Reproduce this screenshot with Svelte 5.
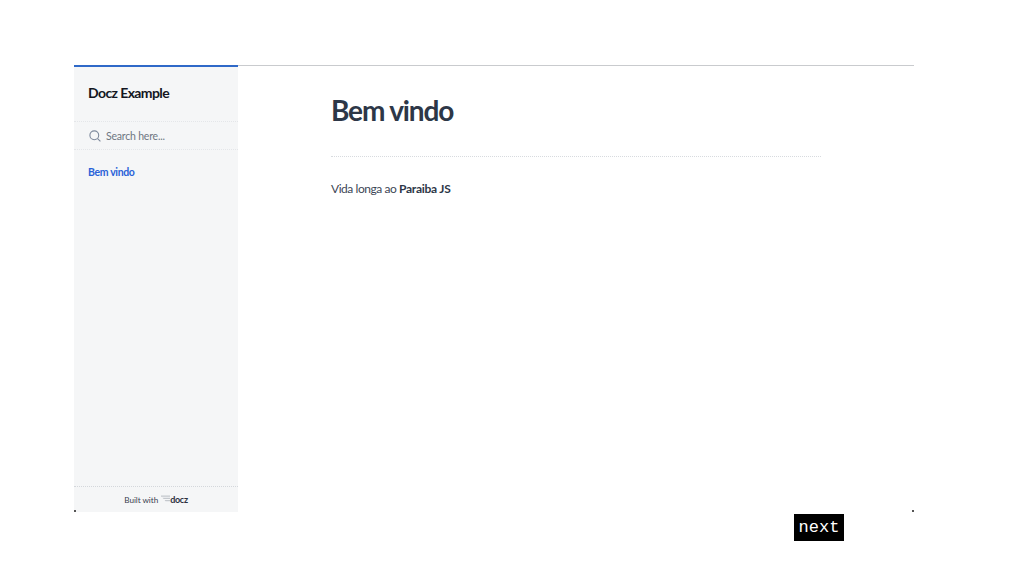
<script>
  const menu = ["Bem vindo"];
</script>

<div class="page">
  <div class="slide">
    <aside class="sidebar">
      <h2 class="brand">Docz Example</h2>
      <div class="search">
        <svg width="12" height="12" viewBox="0 0 12 12" fill="none" stroke="#7d899c" stroke-width="1.1">
          <circle cx="5.3" cy="5.3" r="4.4" />
          <path d="M8.6 8.6 11.4 11.4" />
        </svg>
        <span>Search here...</span>
      </div>
      <nav>
        {#each menu as item}
          <span class="link">{item}</span>
        {/each}
      </nav>
      <footer>
        <span>Built with</span>
        <span class="logo">
          <svg width="9" height="8" viewBox="0 0 10 8" fill="#c4c8cd">
            <path d="M0 0H10V1.5H0ZM1.5 2.5H10V4H3ZM4 5H10V6.5H5Z" />
          </svg>
          <b>docz</b>
        </span>
      </footer>
    </aside>
    <main class="content">
      <h1>Bem vindo</h1>
      <hr />
      <p>Vida longa ao <strong>Paraiba JS</strong></p>
    </main>
    <i class="corner left"></i>
    <i class="corner right"></i>
  </div>
  <button class="next" type="button">next</button>
</div>

<style>
  :global(body) {
    background: #fff;
  }

  .page {
    position: relative;
    width: 1024px;
    height: 576px;
    padding: 65px 110px 0 74px;
    box-sizing: border-box;
    overflow: hidden;
    font-family: Lato, "Open Sans", sans-serif;
  }

  .slide {
    position: relative;
    display: flex;
    height: 447px;
  }

  .sidebar {
    width: 164px;
    flex: none;
    display: flex;
    flex-direction: column;
    box-sizing: border-box;
    border-top: 2px solid #2f69c8;
    background: #f5f6f7;
  }

  .brand {
    margin: 0;
    padding: 17px 14px 0;
    height: 54px;
    box-sizing: border-box;
    font-size: 14px;
    line-height: 18px;
    font-weight: 700;
    letter-spacing: -0.6px;
    color: #13161f;
  }

  .search {
    display: flex;
    align-items: center;
    gap: 5px;
    height: 29px;
    box-sizing: border-box;
    padding-left: 15px;
    border-top: 1px dotted #e4e6e9;
    border-bottom: 1px dotted #e4e6e9;
    font-size: 10.5px;
    letter-spacing: -0.2px;
    color: #6f7782;
  }

  nav {
    flex: 1;
    padding: 15px 14px 0;
  }

  .link {
    display: block;
    font-size: 10.5px;
    line-height: 14px;
    font-weight: 700;
    letter-spacing: -0.35px;
    color: #2a62d8;
  }

  footer {
    display: flex;
    justify-content: center;
    align-items: center;
    gap: 3px;
    height: 26px;
    box-sizing: border-box;
    border-top: 1px dotted #d4d7db;
    font-size: 8.2px;
    letter-spacing: -0.05px;
    color: #3a4150;
  }

  .logo {
    display: flex;
    align-items: center;
    margin-bottom: 1px;
  }

  .logo b {
    font-size: 9px;
    font-weight: 700;
    letter-spacing: -0.3px;
    color: #2c3140;
  }

  .content {
    flex: 1;
    border-top: 1px solid #c9cbce;
    padding: 26px 93px 0 93px;
  }

  h1 {
    margin: 0;
    font-size: 28px;
    line-height: 36px;
    font-weight: 700;
    letter-spacing: -1.15px;
    color: #2d3747;
  }

  hr {
    margin: 28px 0 0;
    border: 0;
    border-top: 1px dotted #d8dbdf;
  }

  p {
    margin: 23px 0 0;
    font-size: 12px;
    line-height: 17px;
    letter-spacing: -0.45px;
    color: #3d4656;
  }

  strong {
    font-weight: 700;
    letter-spacing: -0.25px;
    color: #2d3747;
  }

  .corner {
    position: absolute;
    bottom: 0;
    width: 2px;
    height: 2px;
    background: #555;
  }

  .corner.left {
    left: 0;
  }

  .corner.right {
    right: 0;
  }

  .next {
    position: absolute;
    left: 794px;
    top: 514px;
    width: 50px;
    height: 27px;
    padding: 0;
    border: 0;
    background: #000;
    color: #fff;
    font-family: "Liberation Mono", monospace;
    font-size: 17px;
  }
</style>
